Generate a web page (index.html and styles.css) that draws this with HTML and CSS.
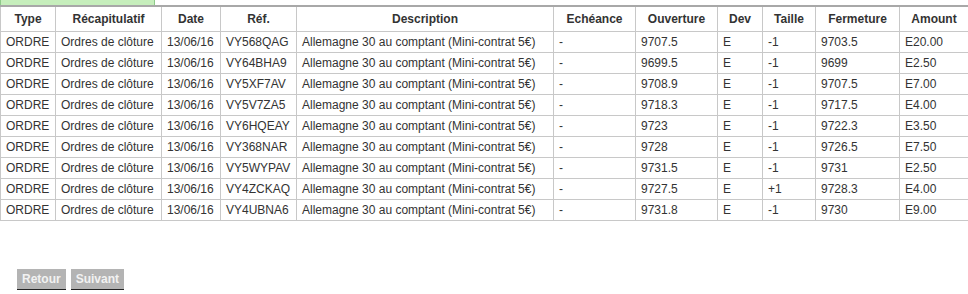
FILE: index.html
```html
<!DOCTYPE html>
<html lang="fr">
<head>
<meta charset="utf-8">
<title>Ordres</title>
<link rel="stylesheet" href="styles.css">
</head>
<body>
<div class="topstrip"><div class="greenbox"></div></div>
<table class="orders">
<colgroup>
<col style="width:55px"><col style="width:106px"><col style="width:59px"><col style="width:76px"><col style="width:257px"><col style="width:82px"><col style="width:82px"><col style="width:45px"><col style="width:53px"><col style="width:84px"><col style="width:69px">
</colgroup>
<thead>
<tr><th>Type</th><th>Récapitulatif</th><th>Date</th><th>Réf.</th><th>Description</th><th>Echéance</th><th>Ouverture</th><th>Dev</th><th>Taille</th><th>Fermeture</th><th>Amount</th></tr>
</thead>
<tbody>
<tr><td>ORDRE</td><td>Ordres de clôture</td><td>13/06/16</td><td>VY568QAG</td><td>Allemagne 30 au comptant (Mini-contrat 5€)</td><td>-</td><td>9707.5</td><td>E</td><td>-1</td><td>9703.5</td><td>E20.00</td></tr>
<tr><td>ORDRE</td><td>Ordres de clôture</td><td>13/06/16</td><td>VY64BHA9</td><td>Allemagne 30 au comptant (Mini-contrat 5€)</td><td>-</td><td>9699.5</td><td>E</td><td>-1</td><td>9699</td><td>E2.50</td></tr>
<tr><td>ORDRE</td><td>Ordres de clôture</td><td>13/06/16</td><td>VY5XF7AV</td><td>Allemagne 30 au comptant (Mini-contrat 5€)</td><td>-</td><td>9708.9</td><td>E</td><td>-1</td><td>9707.5</td><td>E7.00</td></tr>
<tr><td>ORDRE</td><td>Ordres de clôture</td><td>13/06/16</td><td>VY5V7ZA5</td><td>Allemagne 30 au comptant (Mini-contrat 5€)</td><td>-</td><td>9718.3</td><td>E</td><td>-1</td><td>9717.5</td><td>E4.00</td></tr>
<tr><td>ORDRE</td><td>Ordres de clôture</td><td>13/06/16</td><td>VY6HQEAY</td><td>Allemagne 30 au comptant (Mini-contrat 5€)</td><td>-</td><td>9723</td><td>E</td><td>-1</td><td>9722.3</td><td>E3.50</td></tr>
<tr><td>ORDRE</td><td>Ordres de clôture</td><td>13/06/16</td><td>VY368NAR</td><td>Allemagne 30 au comptant (Mini-contrat 5€)</td><td>-</td><td>9728</td><td>E</td><td>-1</td><td>9726.5</td><td>E7.50</td></tr>
<tr><td>ORDRE</td><td>Ordres de clôture</td><td>13/06/16</td><td>VY5WYPAV</td><td>Allemagne 30 au comptant (Mini-contrat 5€)</td><td>-</td><td>9731.5</td><td>E</td><td>-1</td><td>9731</td><td>E2.50</td></tr>
<tr><td>ORDRE</td><td>Ordres de clôture</td><td>13/06/16</td><td>VY4ZCKAQ</td><td>Allemagne 30 au comptant (Mini-contrat 5€)</td><td>-</td><td>9727.5</td><td>E</td><td>+1</td><td>9728.3</td><td>E4.00</td></tr>
<tr><td>ORDRE</td><td>Ordres de clôture</td><td>13/06/16</td><td>VY4UBNA6</td><td>Allemagne 30 au comptant (Mini-contrat 5€)</td><td>-</td><td>9731.8</td><td>E</td><td>-1</td><td>9730</td><td>E9.00</td></tr>
</tbody>
</table>
<div class="pager">
<button class="btn" type="button">Retour</button>
<button class="btn" type="button">Suivant</button>
</div>
</body>
</html>
```

FILE: styles.css
```css
html, body {
  margin: 0;
  padding: 0;
  background: #fff;
}
body {
  font-family: Arial, "Liberation Sans", sans-serif;
  font-size: 12px;
  color: #333;
  width: 968px;
  overflow: hidden;
}
.topstrip {
  height: 5px;
  overflow: hidden;
}
.greenbox {
  width: 153px;
  height: 20px;
  margin-top: -15px;
  background: #c6eebc;
  border: 1px solid #8fc98a;
  border-radius: 2px;
}
.orders {
  border-collapse: collapse;
  table-layout: fixed;
  width: 968px;
  border-top: 2px solid #a8a8a8;
}
.orders th,
.orders td {
  border: 1px solid #c8c8c8;
  padding: 0 5px;
  white-space: nowrap;
  overflow: hidden;
}
.orders th {
  height: 24px;
  font-weight: bold;
  text-align: center;
  color: #333;
}
.orders thead tr th {
  border-top: 2px solid #a8a8a8;
}
.orders td {
  height: 20px;
  text-align: left;
}
.pager {
  display: flex;
  gap: 5px;
  padding: 48px 0 0 17px;
}
.btn {
  font-family: Arial, "Liberation Sans", sans-serif;
  font-size: 12px;
  font-weight: bold;
  color: #f2f2f2;
  background: #b4b4b4;
  border: 0;
  border-bottom: 1px solid #222;
  padding: 0 5px;
  height: 21px;
  margin: 0;
}
```
